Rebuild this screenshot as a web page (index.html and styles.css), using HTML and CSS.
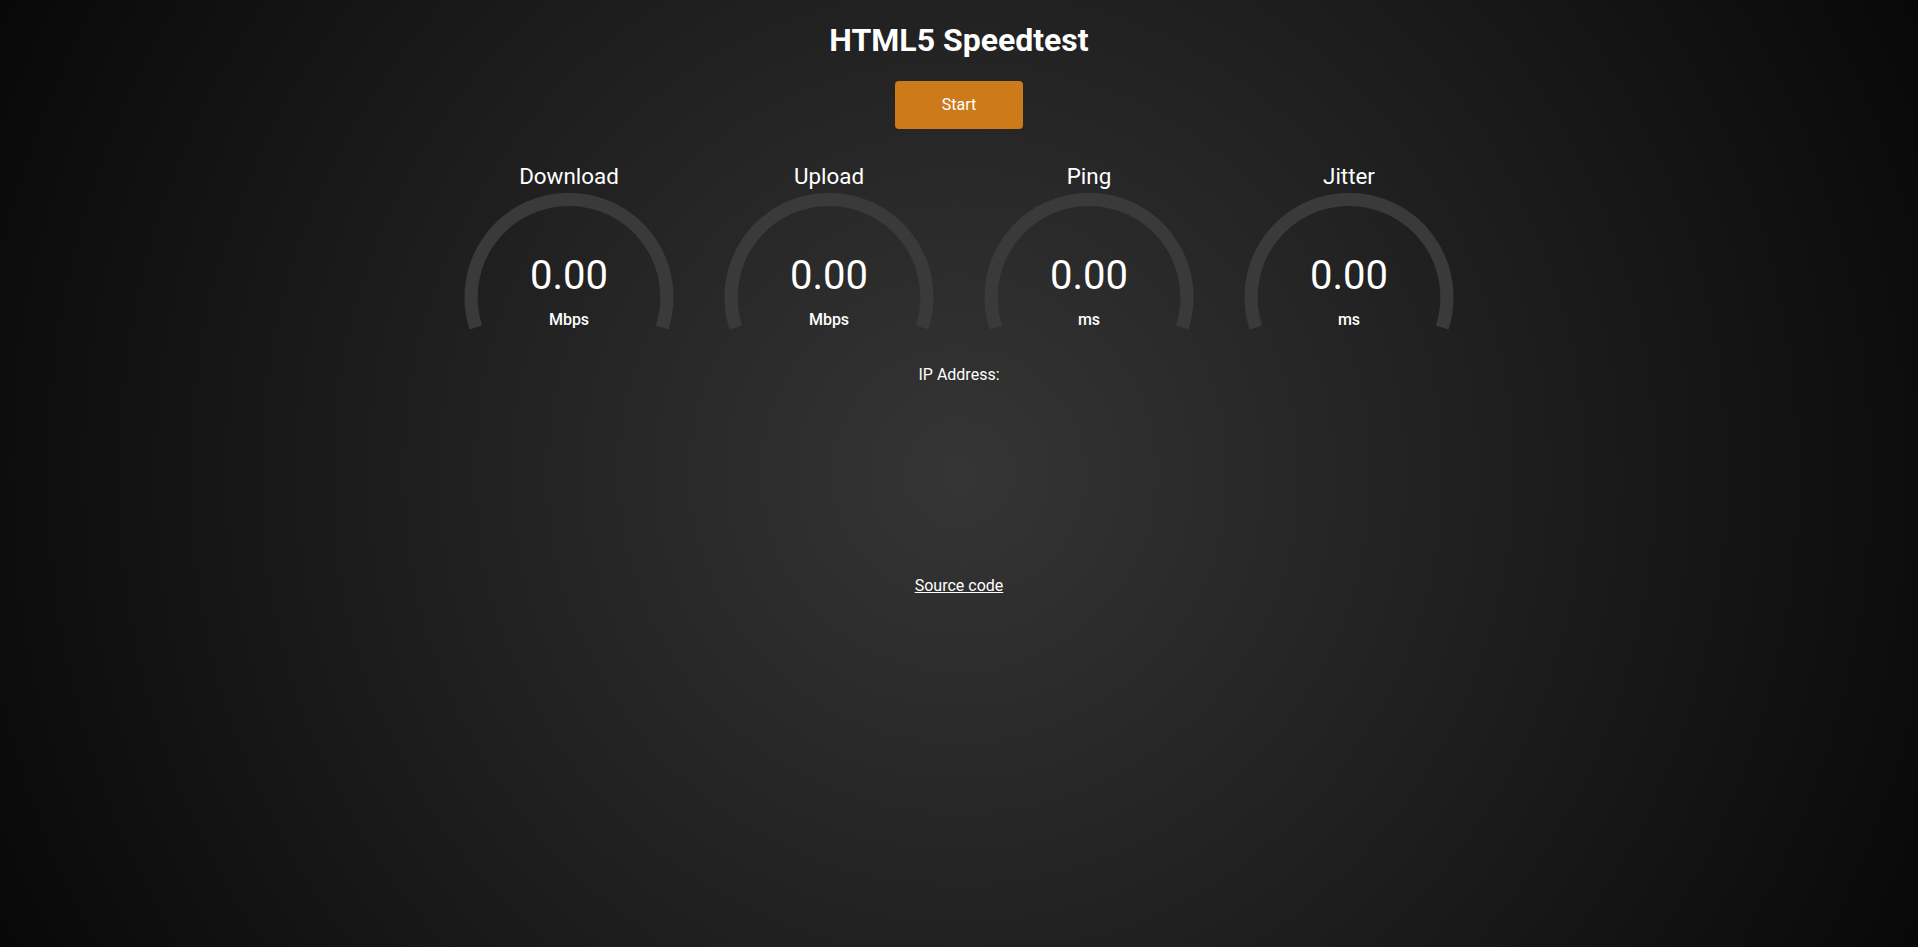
FILE: index.html
```html
<!DOCTYPE html>
<html lang="en">
<head>
<meta charset="utf-8">
<title>HTML5 Speedtest</title>
<link rel="stylesheet" href="styles.css">
</head>
<body>
<h1 class="title">HTML5 Speedtest</h1>
<div class="start-btn">Start</div>
<div class="test">
  <div class="test-row">
    <div class="test-area">
      <svg class="meter" viewBox="0 0 256 200" width="256" height="200"><path d="M 34.89 166.45 A 97.9 97.9 0 1 1 221.11 166.45" fill="none" stroke="#3a3a3a" stroke-width="13.2"/></svg>
      <div class="test-name">Download</div>
      <div class="meter-text">0.00</div>
      <div class="unit">Mbps</div>
    </div>
    <div class="test-area">
      <svg class="meter" viewBox="0 0 256 200" width="256" height="200"><path d="M 34.89 166.45 A 97.9 97.9 0 1 1 221.11 166.45" fill="none" stroke="#3a3a3a" stroke-width="13.2"/></svg>
      <div class="test-name">Upload</div>
      <div class="meter-text">0.00</div>
      <div class="unit">Mbps</div>
    </div>
    <div class="test-area">
      <svg class="meter" viewBox="0 0 256 200" width="256" height="200"><path d="M 34.89 166.45 A 97.9 97.9 0 1 1 221.11 166.45" fill="none" stroke="#3a3a3a" stroke-width="13.2"/></svg>
      <div class="test-name">Ping</div>
      <div class="meter-text">0.00</div>
      <div class="unit">ms</div>
    </div>
    <div class="test-area">
      <svg class="meter" viewBox="0 0 256 200" width="256" height="200"><path d="M 34.89 166.45 A 97.9 97.9 0 1 1 221.11 166.45" fill="none" stroke="#3a3a3a" stroke-width="13.2"/></svg>
      <div class="test-name">Jitter</div>
      <div class="meter-text">0.00</div>
      <div class="unit">ms</div>
    </div>
  </div>
  <div class="ip-area">IP Address: <span class="ip"></span></div>
</div>
<a class="source-link" href="#">Source code</a>
</body>
</html>
```
FILE: styles.css
```css
html {
  height: 100%;
  background: radial-gradient(circle farthest-corner at 50% 50%, #353535 0%, #080808 100%);
  background-color: #080808;
}
body {
  margin: 0;
  padding: 0;
  min-height: 100%;
  text-align: center;
  font-family: Roboto, "Liberation Sans", sans-serif;
  font-size: 16px;
  color: #ffffff;
}
.title {
  font-size: 32px;
  font-weight: 700;
  margin: 21.44px 0;
  line-height: normal;
}
.start-btn {
  width: 128px;
  height: 48px;
  line-height: 48px;
  margin: 0 auto;
  background-color: #cc7a1a;
  border-radius: 4px;
  color: #ffffff;
  cursor: pointer;
}
.test {
  margin-top: 32px;
  margin-bottom: 192px;
}
.test-row {
  display: flex;
  justify-content: center;
  gap: 4px;
}
.test-area {
  display: grid;
  grid-template-columns: 256px;
  grid-template-rows: 200px;
}
.test-area > * {
  grid-area: 1 / 1;
}
.meter {
  display: block;
}
.test-name {
  align-self: start;
  font-size: 22.4px;
  margin-top: 2.24px;
}
.meter-text {
  align-self: end;
  font-size: 40px;
  margin-bottom: 62px;
}
.unit {
  align-self: end;
  font-weight: 500;
  margin-bottom: 32px;
}
.ip-area {
  margin-top: 4px;
}
.source-link {
  color: #ffffff;
  text-decoration: underline;
}
```
